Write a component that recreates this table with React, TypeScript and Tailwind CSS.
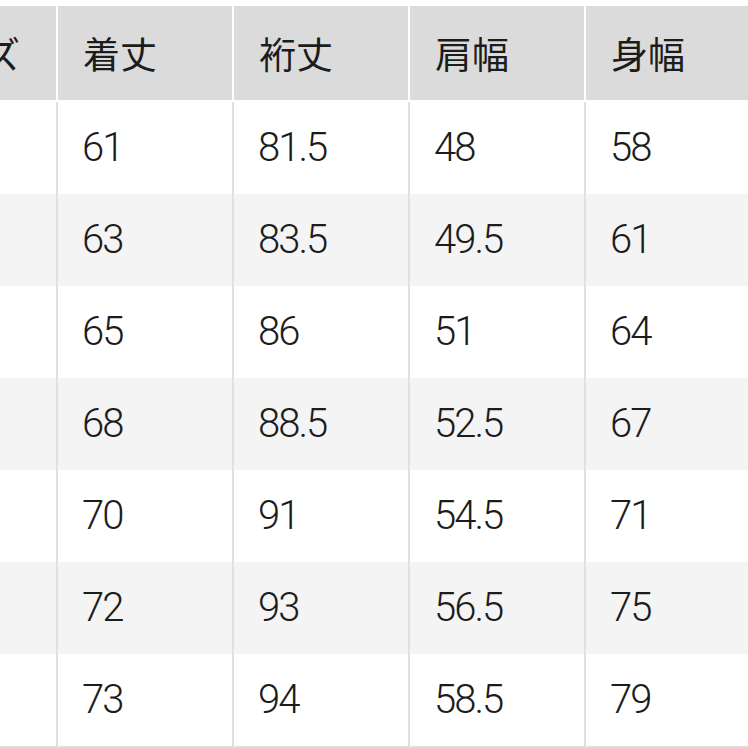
import React from "react";

const headers = ["サイズ", "着丈", "裄丈", "肩幅", "身幅"];
const rows: string[][] = [
  ["61", "81.5", "48", "58"],
  ["63", "83.5", "49.5", "61"],
  ["65", "86", "51", "64"],
  ["68", "88.5", "52.5", "67"],
  ["70", "91", "54.5", "71"],
  ["72", "93", "56.5", "75"],
  ["73", "94", "58.5", "79"],
];

export default function App() {
  return (
    <div className="w-[748px] h-[748px] overflow-hidden bg-white pt-[6px]">
      <div className="ml-[-118px] w-[880px] text-[#1c1c1c]">
        <div className="flex h-[94px] mb-[2px]">
          {headers.map((h, i) => (
            <div
              key={i}
              className={
                "w-[176px] shrink-0 h-full border-r-2 border-white bg-[#dbdbdb] flex items-center text-[37px] leading-none " +
                (i === 0 ? "justify-end pr-[36px]" : "pl-[25px]")
              }
              style={{ fontFamily: '"Noto Sans CJK JP", "Noto Sans", sans-serif' }}
            >
              {h}
            </div>
          ))}
        </div>
        {rows.map((r, ri) => (
          <div
            key={ri}
            className={
              "flex h-[92px] " + (ri % 2 === 1 ? "bg-[#f4f4f4]" : "bg-white")
            }
          >
            <div className="w-[176px] shrink-0 h-full border-r-2 border-[#e0e0e0]" />
            {r.map((c, ci) => (
              <div
                key={ci}
                className="w-[176px] shrink-0 h-full border-r-2 border-[#e0e0e0] flex items-center pl-[24px] text-[40px] leading-none font-light tracking-[-2px]"
                style={{ fontFamily: 'Roboto, "Noto Sans", sans-serif' }}
              >
                {c}
              </div>
            ))}
          </div>
        ))}
        <div className="h-[2px] bg-[#dedede]" />
      </div>
    </div>
  );
}
